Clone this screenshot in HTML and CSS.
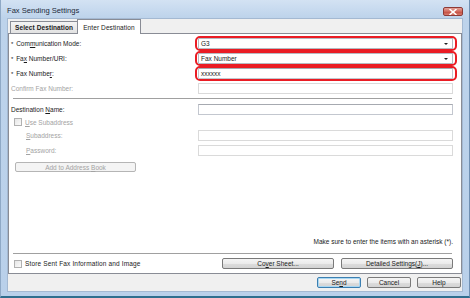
FILE: index.html
```html
<!DOCTYPE html>
<html lang="en">
<head>
  <meta charset="utf-8"/>
  <title>Fax Sending Settings</title>
  <link rel="stylesheet" href="styles.css">
</head>
<body>
  <div class="window">

    <div class="titlebar">
      <span class="title">Fax Sending Settings</span>
      <span class="btn-close" aria-label="Close">
        <svg width="8" height="6" viewBox="0 0 8 6">
          <path d="M1 0.5l6 5M7 0.5l-6 5" stroke="#fff" stroke-width="1.6" stroke-linecap="round"/>
        </svg>
      </span>
    </div>

    <div class="client">
      <div class="tabs">
        <div class="tab">Select Destination</div>
        <div class="tab active">Enter Destination</div>
      </div>

      <div class="panel">
        <div class="row">
          <span class="label"><span class="req">*</span> Com<u>m</u>unication Mode:</span>
          <div class="fieldbox hl">
            <div class="field select">G3<span class="arrow"></span></div>
          </div>
        </div>
        <div class="row">
          <span class="label"><span class="req">*</span> Fa<u>x</u> Number/URI:</span>
          <div class="fieldbox hl">
            <div class="field select">Fax Number<span class="arrow"></span></div>
          </div>
        </div>
        <div class="row">
          <span class="label"><span class="req">*</span> Fax Numbe<u>r</u>:</span>
          <div class="fieldbox hl">
            <div class="field">xxxxxx</div>
          </div>
        </div>
        <div class="row">
          <span class="label disabled">Confirm Fax Number:</span>
          <div class="fieldbox">
            <div class="field off"></div>
          </div>
        </div>

        <div class="sep"></div>

        <div class="row">
          <span class="label">Destination <u>N</u>ame:</span>
          <div class="fieldbox">
            <div class="field"></div>
          </div>
        </div>

        <div class="check-row sub-check disabled">
          <span class="checkbox"></span>
          <span><u>U</u>se Subaddress</span>
        </div>

        <div class="row sub">
          <span class="label disabled"><u>S</u>ubaddress:</span>
          <div class="fieldbox">
            <div class="field off"></div>
          </div>
        </div>
        <div class="row">
          <span class="label disabled indent"><u>P</u>assword:</span>
          <div class="fieldbox">
            <div class="field off"></div>
          </div>
        </div>

        <button class="btn btn-book" disabled>Add to Address <u>B</u>ook</button>

        <div class="spacer"></div>

        <div class="note">Make sure to enter the items with an asterisk (*).</div>

        <div class="sep"></div>

        <div class="footer-row">
          <div class="check-row">
            <span class="checkbox"></span>
            <span class="store">Store Sent Fax Information and Image</span>
          </div>
          <div class="footer-buttons">
            <button class="btn btn-wide">Co<u>v</u>er Sheet...</button>
            <button class="btn btn-wide">Detailed Settings(<u>J</u>)...</button>
          </div>
        </div>
      </div>

      <div class="actions">
        <button class="btn btn-action default">Se<u>n</u>d</button>
        <button class="btn btn-action">Cancel</button>
        <button class="btn btn-action">Help</button>
      </div>
    </div>

  </div>
</body>
</html>
```

FILE: styles.css
```css
body {
  margin: 0;
  font-family: "Liberation Sans", Arial, sans-serif;
  font-size: 6.5px;
  color: #1a1a1a;
}

.window {
  width: 470px;
  height: 298px;
  box-sizing: border-box;
  display: flex;
  flex-direction: column;
  padding: 0 6px 4px 6px;
  border-left: 1px solid #8fa9c6;
  border-right: 1px solid #6f8fb2;
  border-bottom: 2px solid #2f6e8e;
  background: linear-gradient(to bottom, #d3e2f3 0, #bdd3eb 18px, #b9d0ea 100%);
}

.titlebar {
  height: 18px;
  display: flex;
  align-items: flex-start;
  justify-content: space-between;
  flex-shrink: 0;
}

.title {
  font-size: 7.6px;
  color: #1e2a3a;
  padding-top: 6px;
}

.btn-close {
  width: 20px;
  height: 9px;
  margin-top: 7px;
  border: 1px solid #8e3a36;
  border-radius: 2px;
  box-sizing: border-box;
  background: linear-gradient(to bottom, #e3a39a 0%, #d1685c 50%, #c24a3c 51%, #d77a6c 100%);
  display: flex;
  align-items: center;
  justify-content: center;
}

.client {
  flex: 1;
  display: flex;
  flex-direction: column;
  background-color: #f0f0f0;
  border: 1px solid #a4b9d2;
}

.tabs {
  height: 14px;
  display: flex;
  align-items: flex-end;
  padding-left: 2px;
  flex-shrink: 0;
}

.tab {
  height: 12px;
  box-sizing: border-box;
  padding: 0 4px;
  display: flex;
  align-items: center;
  border: 1px solid #898c95;
  border-bottom: none;
  background: linear-gradient(to bottom, #f3f3f3, #e2e2e2);
  color: #222;
  font-weight: bold;
  letter-spacing: 0.1px;
}

.tab.active {
  height: 15px;
  margin-bottom: -1px;
  margin-left: -1px;
  padding: 0 5px;
  background: #fff;
  font-weight: normal;
  position: relative;
  z-index: 1;
}

.panel {
  flex: 1;
  display: flex;
  flex-direction: column;
  background-color: #fff;
  border: 1px solid #898c95;
  padding: 2px 4px 4px 2px;
}

.row {
  height: 15px;
  display: flex;
  align-items: center;
}

.label {
  width: 184px;
  flex-shrink: 0;
}

.req {
  font-size: 6px;
  margin-right: 1px;
}

.disabled {
  color: #a3a3a3;
}

.row.sub {
  margin-top: 1px;
}

.row.sub .label,
.label.indent {
  padding-left: 15px;
  width: 169px;
}

.fieldbox {
  width: 262px;
  height: 15px;
  box-sizing: border-box;
  border: 2px solid transparent;
  border-radius: 5px;
  padding: 0 2px 0 1px;
  display: flex;
  align-items: center;
}

.fieldbox.hl {
  border-color: #ea1c24;
}

.field {
  flex: 1;
  height: 11px;
  box-sizing: border-box;
  border: 1px solid #c3c7cf;
  border-top-color: #a6a9b0;
  background: #fff;
  display: flex;
  align-items: center;
  padding-left: 2px;
  position: relative;
}

.field.select {
  border-color: #b7bac1;
}

.field.off {
  border-color: #dadada;
}

.arrow {
  position: absolute;
  right: 4px;
  top: 4px;
  border-left: 2px solid transparent;
  border-right: 2px solid transparent;
  border-top: 2px solid #222;
}

.sep {
  height: 1px;
  background-color: #a0a0a0;
  margin: 2px 5px 3px 2px;
  flex-shrink: 0;
}

.check-row {
  height: 12px;
  display: flex;
  align-items: center;
  gap: 3px;
  padding-left: 3px;
}

.check-row.sub-check {
  height: 10px;
}

.checkbox {
  width: 8px;
  height: 8px;
  box-sizing: border-box;
  border: 1px solid #b1b1b1;
  background: linear-gradient(135deg, #e6e6e6, #fbfbfb);
  flex-shrink: 0;
}

.store {
  letter-spacing: 0.15px;
}

.btn {
  font-family: "Liberation Sans", Arial, sans-serif;
  font-size: 6.5px;
  color: #1a1a1a;
  height: 11px;
  padding: 0;
  box-sizing: border-box;
  border: 1px solid #7a7a7a;
  border-radius: 2px;
  background: linear-gradient(to bottom, #f5f5f5 0%, #ebebeb 50%, #dddddd 51%, #d3d3d3 100%);
  line-height: 9px;
}

.btn:disabled {
  color: #a3a3a3;
  border-color: #b5b5b5;
  background: #f4f4f4;
}

.btn-book {
  width: 121px;
  height: 10px;
  margin: 4px 0 0 4px;
  align-self: flex-start;
}

.spacer {
  flex: 1;
}

.note {
  height: 10px;
  line-height: 10px;
  text-align: right;
  padding-right: 4px;
  margin-bottom: 4px;
}

.footer-row {
  height: 11px;
  display: flex;
  align-items: center;
  margin-top: 1px;
}

.footer-buttons {
  margin-left: auto;
  margin-right: 4px;
  display: flex;
  gap: 7px;
}

.btn-wide {
  width: 112px;
}

.actions {
  height: 17px;
  display: flex;
  align-items: center;
  justify-content: flex-end;
  gap: 6px;
  padding-right: 1px;
  flex-shrink: 0;
}

.btn-action {
  width: 44px;
}

.btn-action.default {
  border-color: #3c7fb1;
  box-shadow: inset 0 0 0 1px #a9d7f2;
}
```
